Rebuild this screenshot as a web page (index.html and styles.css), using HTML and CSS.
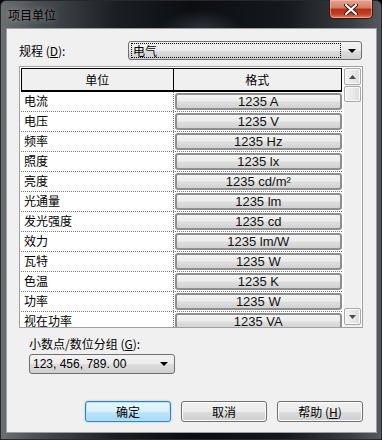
FILE: index.html
```html
<!DOCTYPE html>
<html lang="zh">
<head>
<meta charset="utf-8">
<title>项目单位</title>
<link rel="stylesheet" href="styles.css">
</head>
<body>
<div class="window">
  <div class="titlebar">
    <span class="title">项目单位</span>
    <div class="close">
      <svg width="14" height="11" viewBox="0 0 14 11"><path d="M2 1 L12 10 M12 1 L2 10" stroke="#3a1410" stroke-width="4" stroke-linecap="round"/><path d="M2 1 L12 10 M12 1 L2 10" stroke="#ffffff" stroke-width="2.2" stroke-linecap="round"/></svg>
    </div>
  </div>
  <div class="client">
    <div class="row-top">
      <span class="label">规程 (<u>D</u>):</span>
      <div class="combo combo-wide">
        <span class="combo-focus">电气</span>
        <span class="arrow"></span>
      </div>
    </div>
    <div class="table-box">
      <div class="table">
        <div class="thead">
          <div class="th th1">单位</div>
          <div class="th th2">格式</div>
        </div>
        <div class="tbody">
          <div class="tr"><div class="td1">电流</div><div class="td2"><span class="cellbtn">1235 A</span></div></div>
          <div class="tr"><div class="td1">电压</div><div class="td2"><span class="cellbtn">1235 V</span></div></div>
          <div class="tr"><div class="td1">频率</div><div class="td2"><span class="cellbtn">1235 Hz</span></div></div>
          <div class="tr"><div class="td1">照度</div><div class="td2"><span class="cellbtn">1235 lx</span></div></div>
          <div class="tr"><div class="td1">亮度</div><div class="td2"><span class="cellbtn">1235 cd/m²</span></div></div>
          <div class="tr"><div class="td1">光通量</div><div class="td2"><span class="cellbtn">1235 lm</span></div></div>
          <div class="tr"><div class="td1">发光强度</div><div class="td2"><span class="cellbtn">1235 cd</span></div></div>
          <div class="tr"><div class="td1">效力</div><div class="td2"><span class="cellbtn">1235 lm/W</span></div></div>
          <div class="tr"><div class="td1">瓦特</div><div class="td2"><span class="cellbtn">1235 W</span></div></div>
          <div class="tr"><div class="td1">色温</div><div class="td2"><span class="cellbtn">1235 K</span></div></div>
          <div class="tr"><div class="td1">功率</div><div class="td2"><span class="cellbtn">1235 W</span></div></div>
          <div class="tr"><div class="td1">视在功率</div><div class="td2"><span class="cellbtn">1235 VA</span></div></div>
        </div>
      </div>
      <div class="scrollbar">
        <div class="sb-btn"><svg width="7" height="4" viewBox="0 0 7 4"><path d="M0 4 L3.5 0 L7 4 Z" fill="#4d4d4d"/></svg></div>
        <div class="sb-thumb"></div>
        <div class="sb-track"></div>
        <div class="sb-btn"><svg width="7" height="4" viewBox="0 0 7 4"><path d="M0 0 L3.5 4 L7 0 Z" fill="#4d4d4d"/></svg></div>
      </div>
    </div>
    <div class="group">
      <div class="label2">小数点/数位分组 (<u>G</u>):</div>
      <div class="combo combo-small">
        <span class="combo-text">123, 456, 789. 00</span>
        <span class="arrow"></span>
      </div>
    </div>
    <div class="buttons">
      <button class="btn btn-default">确定</button>
      <button class="btn">取消</button>
      <button class="btn">帮助 (<u>H</u>)</button>
    </div>
  </div>
</div>
</body>
</html>
```

FILE: styles.css
```css
* { box-sizing: border-box; }
html, body { margin: 0; padding: 0; background: #000; }
body {
  font-family: "Noto Sans CJK SC", "Liberation Sans", sans-serif;
  font-size: 12px;
  color: #000;
}
.window {
  width: 382px;
  height: 440px;
  display: flex;
  flex-direction: column;
  background:
    radial-gradient(ellipse 60px 30px at 200px 30px, rgba(90,96,104,0.5), rgba(0,0,0,0) 70%),
    linear-gradient(90deg, #6c6e70 0%, #44474b 12%, #1b1e22 30%, #0b0d11 50%, #15181c 75%, #3a3d42 92%, #55585c 100%);
  border-radius: 6px 6px 0 0;
  border: 1px solid #26282c;
}
.titlebar {
  height: 28px;
  display: flex;
  align-items: flex-start;
  flex-shrink: 0;
}
.title {
  margin: 6px 0 0 7px;
  font-size: 12px;
  line-height: 16px;
  color: #000;
  text-shadow: 0 0 6px rgba(255,255,255,0.5);
}
.close {
  margin-left: auto;
  margin-right: 8px;
  margin-top: -1px;
  width: 44px;
  height: 19px;
  border: 1px solid #3b1510;
  border-top: none;
  border-radius: 0 0 5px 5px;
  background: linear-gradient(180deg, #e8a493 0%, #d47a64 45%, #b42d12 50%, #c4442a 80%, #e0826a 100%);
  box-shadow: inset 0 0 0 1px rgba(255,200,190,0.5);
  display: flex;
  align-items: center;
  justify-content: center;
}
.client {
  margin: 0 5px 7px 6px;
  flex: 1;
  background: #f0f0f0;
  box-shadow: 0 0 0 1px #9aa0a8;
  padding: 12px 13px 0 12px;
  display: flex;
  flex-direction: column;
}
.row-top {
  display: flex;
  align-items: center;
  height: 19px;
}
.label {
  width: 109px;
  line-height: 14px;
  padding-top: 1px;
}
.combo {
  height: 19px;
  border: 1px solid #707070;
  border-radius: 3px;
  background: linear-gradient(180deg, #f2f2f2 0%, #ebebeb 50%, #dddddd 51%, #cfcfcf 100%);
  display: flex;
  align-items: center;
  position: relative;
}
.combo-wide { width: 234px; padding: 1px 2px 1px 2px; }
.combo-focus {
  flex: 1;
  height: 15px;
  border: 1px dotted #000;
  line-height: 13px;
  padding-left: 1px;
  margin-right: 18px;
}
.arrow {
  position: absolute;
  right: 5px;
  top: 7px;
  width: 0;
  height: 0;
  border-left: 4px solid transparent;
  border-right: 4px solid transparent;
  border-top: 4px solid #000;
}
.table-box {
  margin-top: 6px;
  width: 344px;
  height: 262px;
  border: 1px solid #a0a0a0;
  background: #fff;
  display: flex;
  padding: 1px 1px 0 1px;
  overflow: hidden;
}
.table {
  width: 322px;
  overflow: hidden;
  background: #fff;
}
.thead {
  display: flex;
  height: 24px;
  border-bottom: 2px solid #000;
  background: #f0f0f0;
}
.th {
  display: flex;
  align-items: center;
  justify-content: center;
  border-top: 1px solid #000;
  border-left: 1px solid #000;
  background: #f0f0f0;
}
.th1 { width: 152px; }
.th2 { width: 170px; border-right: 1px solid #000; }
.tr {
  display: flex;
  height: 20px;
  border-bottom: 1px dotted #7a7a7a;
}
.td1 {
  width: 152px;
  padding-left: 2px;
  line-height: 17px;
  border-left: 1px solid #fff;
}
.td2 {
  width: 170px;
  border-left: 1px dotted #7a7a7a;
  padding: 1px 0 1px 1px;
}
.cellbtn {
  display: flex;
  height: 17px;
  align-items: center;
  justify-content: center;
  border: 2px solid #8e8e8e;
  border-radius: 3px;
  background: linear-gradient(180deg, #f4f4f4 0%, #ececec 45%, #dedede 55%, #d2d2d2 100%);
  font-family: "Liberation Sans", sans-serif;
  font-size: 13px;
  line-height: 13px;
  color: #111;
}
.scrollbar {
  width: 17px;
  margin-left: 2px;
  display: flex;
  flex-direction: column;
  background: #f0f0f0;
  padding-bottom: 2px;
}
.sb-btn, .sb-thumb {
  border: 1px solid #a9a9a9;
  border-radius: 2px;
  background: linear-gradient(90deg, #f3f3f3 0%, #e9e9e9 50%, #dcdcdc 100%);
  box-shadow: inset 0 0 0 1px #fafafa;
  display: flex;
  align-items: center;
  justify-content: center;
}
.sb-btn { height: 17px; }
.sb-thumb { height: 16px; margin-top: 1px; }
.sb-track { flex: 1; }
.group {
  margin-top: 9px;
  padding-left: 10px;
}
.label2 {
  line-height: 14px;
  height: 14px;
}
.combo-small {
  margin-top: 3px;
  width: 146px;
  height: 20px;
  padding-left: 3px;
}
.combo-small .arrow { right: 6px; top: 7px; }
.combo-text {
  font-family: "Liberation Sans", sans-serif;
  font-size: 12px;
}
.buttons {
  margin-top: 27px;
  display: flex;
  justify-content: flex-end;
  gap: 10px;
}
.btn {
  width: 86px;
  height: 21px;
  margin: 0;
  padding: 0;
  border: 1px solid #707070;
  border-radius: 3px;
  background: linear-gradient(180deg, #f2f2f2 0%, #ebebeb 50%, #dddddd 51%, #cfcfcf 100%);
  box-shadow: inset 0 0 0 1px #fcfcfc;
  font-family: "Noto Sans CJK SC", "Liberation Sans", sans-serif;
  font-size: 12px;
  line-height: 14px;
  color: #000;
}
.btn-default {
  border-color: #3c7fb1;
  background: linear-gradient(180deg, #eaf6fd 0%, #d9f0fc 50%, #bee6fd 51%, #a7d9f5 100%);
  box-shadow: inset 0 0 0 1px #b3e4fc, 0 0 2px #6ec7f7;
}
u { text-decoration: underline; }
```
